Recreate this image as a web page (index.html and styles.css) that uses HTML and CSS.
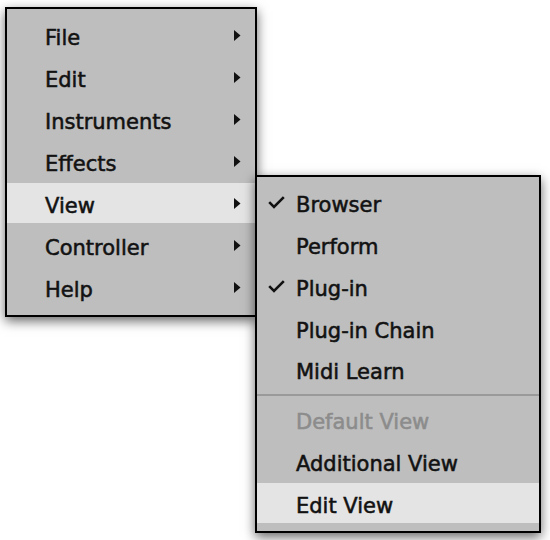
FILE: index.html
```html
<!DOCTYPE html>
<html>
<head>
<meta charset="utf-8">
<link rel="stylesheet" href="styles.css">
</head>
<body>
<div class="stage">
  <ul class="menu main">
    <li class="item"><span class="label">File</span><svg class="arrow" width="7" height="11" viewBox="0 0 7 11"><polygon points="0,0 6.5,5.5 0,11"/></svg></li>
    <li class="item"><span class="label">Edit</span><svg class="arrow" width="7" height="11" viewBox="0 0 7 11"><polygon points="0,0 6.5,5.5 0,11"/></svg></li>
    <li class="item"><span class="label">Instruments</span><svg class="arrow" width="7" height="11" viewBox="0 0 7 11"><polygon points="0,0 6.5,5.5 0,11"/></svg></li>
    <li class="item"><span class="label">Effects</span><svg class="arrow" width="7" height="11" viewBox="0 0 7 11"><polygon points="0,0 6.5,5.5 0,11"/></svg></li>
    <li class="item active"><span class="label">View</span><svg class="arrow" width="7" height="11" viewBox="0 0 7 11"><polygon points="0,0 6.5,5.5 0,11"/></svg></li>
    <li class="item"><span class="label">Controller</span><svg class="arrow" width="7" height="11" viewBox="0 0 7 11"><polygon points="0,0 6.5,5.5 0,11"/></svg></li>
    <li class="item"><span class="label">Help</span><svg class="arrow" width="7" height="11" viewBox="0 0 7 11"><polygon points="0,0 6.5,5.5 0,11"/></svg></li>
  </ul>
  <ul class="menu sub">
    <li class="item"><span class="check"><svg width="17" height="13" viewBox="0 0 17 13"><path d="M1.2 6.2 L6 11 L15.8 1.2"/></svg></span><span class="label">Browser</span></li>
    <li class="item"><span class="check"></span><span class="label">Perform</span></li>
    <li class="item"><span class="check"><svg width="17" height="13" viewBox="0 0 17 13"><path d="M1.2 6.2 L6 11 L15.8 1.2"/></svg></span><span class="label">Plug-in</span></li>
    <li class="item"><span class="check"></span><span class="label">Plug-in Chain</span></li>
    <li class="item"><span class="check"></span><span class="label">Midi Learn</span></li>
    <li class="sep"></li>
    <li class="item disabled"><span class="check"></span><span class="label">Default View</span></li>
    <li class="item"><span class="check"></span><span class="label">Additional View</span></li>
    <li class="item active"><span class="check"></span><span class="label">Edit View</span></li>
  </ul>
</div>
</body>
</html>
```
FILE: styles.css
```css
html, body {
  margin: 0;
  padding: 0;
  background: #ffffff;
}

.stage {
  position: relative;
  width: 550px;
  height: 540px;
  padding: 7px 0 0 5px;
  box-sizing: border-box;
  font-family: "DejaVu Sans", "Liberation Sans", sans-serif;
  font-size: 21px;
  color: #121212;
}

.menu {
  list-style: none;
  margin: 0;
  background: #bebebe;
  border: 2px solid #000;
  box-shadow: 0 4px 11px rgba(0, 0, 0, 0.6);
  display: flex;
  flex-direction: column;
  gap: 2px;
  padding: 6px 0 8px 0;
  box-sizing: border-box;
}

.main {
  width: 252px;
  height: 310px;
}

.sub {
  position: absolute;
  left: 255px;
  top: 175px;
  width: 286px;
  height: 358px;
}

.item {
  height: 40px;
  display: flex;
  align-items: center;
  box-sizing: border-box;
}

.main .item {
  padding: 0 14px 0 38px;
}

.sub .item {
  padding: 0 0 0 11px;
}

.label {
  padding-top: 5px;
  white-space: nowrap;
  -webkit-text-stroke: 0.55px currentColor;
}

.item.active {
  background: #e4e4e4;
}

.item.disabled {
  color: #8c8c8c;
}

.arrow {
  margin-left: auto;
  display: block;
  fill: #111;
}

.check {
  width: 28px;
  flex: none;
  display: flex;
  align-items: center;
}

.check svg {
  display: block;
  fill: none;
  stroke: #111;
  stroke-width: 2.6;
}

.sep {
  height: 2px;
  margin: 2px 0;
  background: #9a9a9a;
}
```
